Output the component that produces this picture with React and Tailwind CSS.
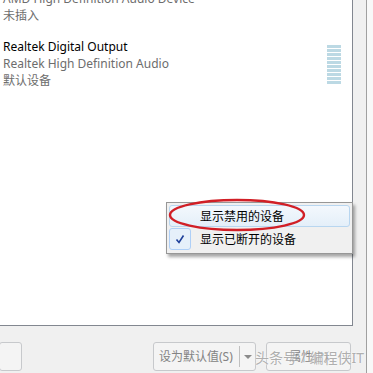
import React from "react";

const sans = { fontFamily: '"Segoe UI","Noto Sans","Noto Sans CJK SC",sans-serif' };

function Meter() {
  return (
    <div className="flex flex-col gap-px w-[14px]">
      {Array.from({ length: 10 }).map((_, i) => (
        <div key={i} className="h-[3px] bg-[#bcd9e4]" />
      ))}
    </div>
  );
}

export default function App() {
  return (
    <div
      className="relative w-[373px] h-[373px] overflow-hidden bg-[#f8f8f8] text-[12px] leading-[17px]"
      style={sans}
    >
      <div className="w-[367px] h-[373px] bg-[#f0f0f0] border-r border-[#a0a0a0] flex flex-col">
        {/* list panel */}
        <div className="w-[353px] h-[326px] bg-white border-r border-b border-[#828790] relative">
          <div className="pl-[3px] -mt-[10px] flex flex-col">
            <div className="text-[#6d6d6d]">AMD High Definition Audio Device</div>
            <div className="text-[#6d6d6d]">未插入</div>
            <div className="h-[14px]" />
            <div className="flex justify-between pr-[11px]">
              <div className="flex flex-col">
                <div className="text-black">Realtek Digital Output</div>
                <div className="text-[#6d6d6d]">Realtek High Definition Audio</div>
                <div className="text-[#6d6d6d]">默认设备</div>
              </div>
              <div className="pt-[7px]">
                <Meter />
              </div>
            </div>
          </div>
        </div>
        {/* buttons */}
        <div className="flex items-start pt-[16px] h-[47px]">
          <div className="w-[23px] h-[29px] -ml-[1px] border border-[#c7c9cc] rounded-[3px] bg-[#f4f4f4]" />
          <div className="ml-[131px] w-[103px] h-[29px] border border-[#c7c9cc] rounded-[3px] bg-[#f4f4f4] flex items-center text-[#838383]">
            <span className="pl-[5px] w-[85px]">设为默认值(S)</span>
            <div className="h-[21px] w-px bg-[#c0c0c0]" />
            <svg width="10" height="6" className="ml-[3px]" viewBox="0 0 10 6">
              <path d="M1 1 L9 1 L5 5 Z" fill="#8a8a8a" />
            </svg>
          </div>
          <div className="ml-[10px] w-[85px] h-[29px] border border-[#c7c9cc] rounded-[3px] bg-[#f4f4f4] flex items-center justify-center text-[#838383]">
            属性(P)
          </div>
        </div>
      </div>

      {/* watermark */}
      <div
        className="absolute left-[255px] top-[349px] text-[14px] leading-[18px] text-[#a8a8a8] whitespace-nowrap opacity-90"
        style={{ textShadow: "0 0 2px #fff, 0 0 2px #fff" }}
      >
        头条号 / 编程侠IT
      </div>

      {/* context menu */}
      <div className="absolute left-[166px] top-[202px] w-[187px] h-[52px] bg-[#f0f0f0] border border-[#979797] shadow-[2px_3px_3px_rgba(0,0,0,0.35)] p-[2px] flex flex-col gap-px">
        <div className="h-[22px] border border-[#b8d6f0] rounded-[3px] bg-gradient-to-b from-[#f3f8fd] to-[#e4eff9] flex items-center">
          <span className="pl-[30px] text-black">显示禁用的设备</span>
        </div>
        <div className="h-[22px] flex items-center">
          <div className="w-[22px] h-[22px] border border-[#aecff7] rounded-[3px] bg-[#e6f0fa] flex items-center justify-center">
            <svg width="10" height="10" viewBox="0 0 10 10">
              <path d="M1.5 5.5 L4 8.5 L8.5 1.5" stroke="#1e3f9a" strokeWidth="1.6" fill="none" />
            </svg>
          </div>
          <span className="pl-[9px] text-black">显示已断开的设备</span>
        </div>
      </div>

      {/* red ellipse */}
      <svg className="absolute left-0 top-0 pointer-events-none" width="373" height="373">
        <ellipse cx="237" cy="215" rx="67" ry="15" fill="none" stroke="#d11f26" strokeWidth="2.4" />
      </svg>
    </div>
  );
}
